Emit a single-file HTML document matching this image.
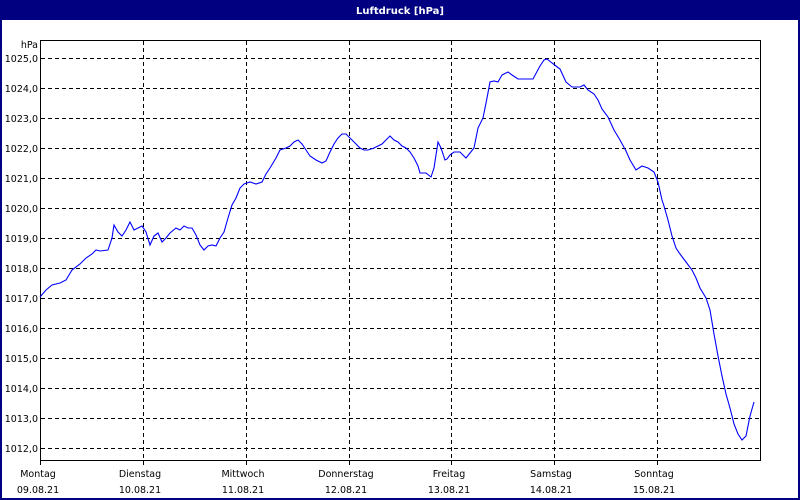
<!DOCTYPE html>
<html><head><meta charset="utf-8"><style>
html,body{margin:0;padding:0;background:#fff}
body{width:800px;height:500px;overflow:hidden;position:relative}
svg{position:absolute;left:0;top:0}
text{font-family:"DejaVu Sans","Liberation Sans",sans-serif;font-size:9.5px;fill:#000}
</style></head><body>
<svg width="800" height="500" viewBox="0 0 800 500">
<rect x="0" y="0" width="800" height="500" fill="#fff"/>
<rect x="1" y="1" width="798" height="498" fill="none" stroke="#000080" stroke-width="2"/>
<rect x="0" y="0" width="800" height="20" fill="#000080"/>
<text x="400" y="14" text-anchor="middle" style="fill:#fff;font-weight:bold;font-size:10px">Luftdruck [hPa]</text>
<g stroke="#000" stroke-width="1" stroke-dasharray="4,3" fill="none">
<path d="M41 58.5H760M41 88.5H760M41 118.5H760M41 148.5H760M41 178.5H760M41 208.5H760M41 238.5H760M41 268.5H760M41 298.5H760M41 328.5H760M41 358.5H760M41 388.5H760M41 418.5H760M41 448.5H760"/>
<path d="M143.5 41V460M246.5 41V460M349.5 41V460M451.5 41V460M554.5 41V460M657.5 41V460"/>
</g>
<rect x="40.5" y="40.5" width="720" height="420" fill="none" stroke="#000"/>
<path d="M40.5 460V465M143.5 460V465M246.5 460V465M349.5 460V465M451.5 460V465M554.5 460V465M657.5 460V465" stroke="#000"/>
<g text-anchor="end">
<text x="38" y="48">hPa</text>
<text x="38" y="62">1025,0</text><text x="38" y="92">1024,0</text><text x="38" y="122">1023,0</text><text x="38" y="152">1022,0</text><text x="38" y="182">1021,0</text><text x="38" y="212">1020,0</text><text x="38" y="242">1019,0</text><text x="38" y="272">1018,0</text><text x="38" y="302">1017,0</text><text x="38" y="332">1016,0</text><text x="38" y="362">1015,0</text><text x="38" y="392">1014,0</text><text x="38" y="422">1013,0</text><text x="38" y="452">1012,0</text>
</g>
<g text-anchor="middle">
<text x="38" y="477">Montag</text><text x="38" y="493">09.08.21</text>
<text x="140" y="477">Dienstag</text><text x="140" y="493">10.08.21</text>
<text x="243" y="477">Mittwoch</text><text x="243" y="493">11.08.21</text>
<text x="346" y="477">Donnerstag</text><text x="346" y="493">12.08.21</text>
<text x="449" y="477">Freitag</text><text x="449" y="493">13.08.21</text>
<text x="551" y="477">Samstag</text><text x="551" y="493">14.08.21</text>
<text x="654" y="477">Sonntag</text><text x="654" y="493">15.08.21</text>
</g>
<polyline fill="none" stroke="#0000ff" stroke-width="1.1" points="40,297 46,290 52,285 60,283 66,280 72,270 80,264 86,258 92,254 96,250 100,251 108,250 112,238 114,225 118,232 122,236 126,230 130,222 134,230 138,228 142,226 146,232 150,245 154,236 158,233 162,242 166,238 170,233 176,228 180,230 184,226 188,228 192,228 196,235 200,245 204,250 208,246 212,245 216,246 220,238 224,232 228,218 232,205 236,198 240,188 244,184 250,182 256,184 262,182 266,174 270,168 276,158 280,150 286,148 290,146 294,142 298,140 302,144 306,150 310,156 316,160 322,163 326,161 330,152 334,144 338,138 342,134 346,134 350,138 356,144 360,148 364,150 368,150 374,148 378,146 382,144 386,140 390,136 394,140 398,142 402,146 406,148 410,152 414,158 418,166 420,173 426,173 431,177 434,168 438,142 441,148 445,160 447,159 450,155 454,152 460,152 466,158 474,148 478,128 483,118 487,98 490,82 494,81 498,82 502,75 508,72 512,75 518,79 533,79 540,66 544,60 547,59 552,63 556,66 560,69 566,82 572,87 580,87 584,85 588,90 594,94 598,100 602,109 608,117 614,130 620,140 626,151 630,160 636,170 642,166 648,168 654,172 658,182 662,200 664,206 668,220 672,236 676,248 680,254 686,262 692,270 696,278 700,288 706,298 710,310 714,334 718,356 722,376 726,394 730,408 734,424 738,434 742,440 746,436 750,416 754,402"/>
</svg>
</body></html>
